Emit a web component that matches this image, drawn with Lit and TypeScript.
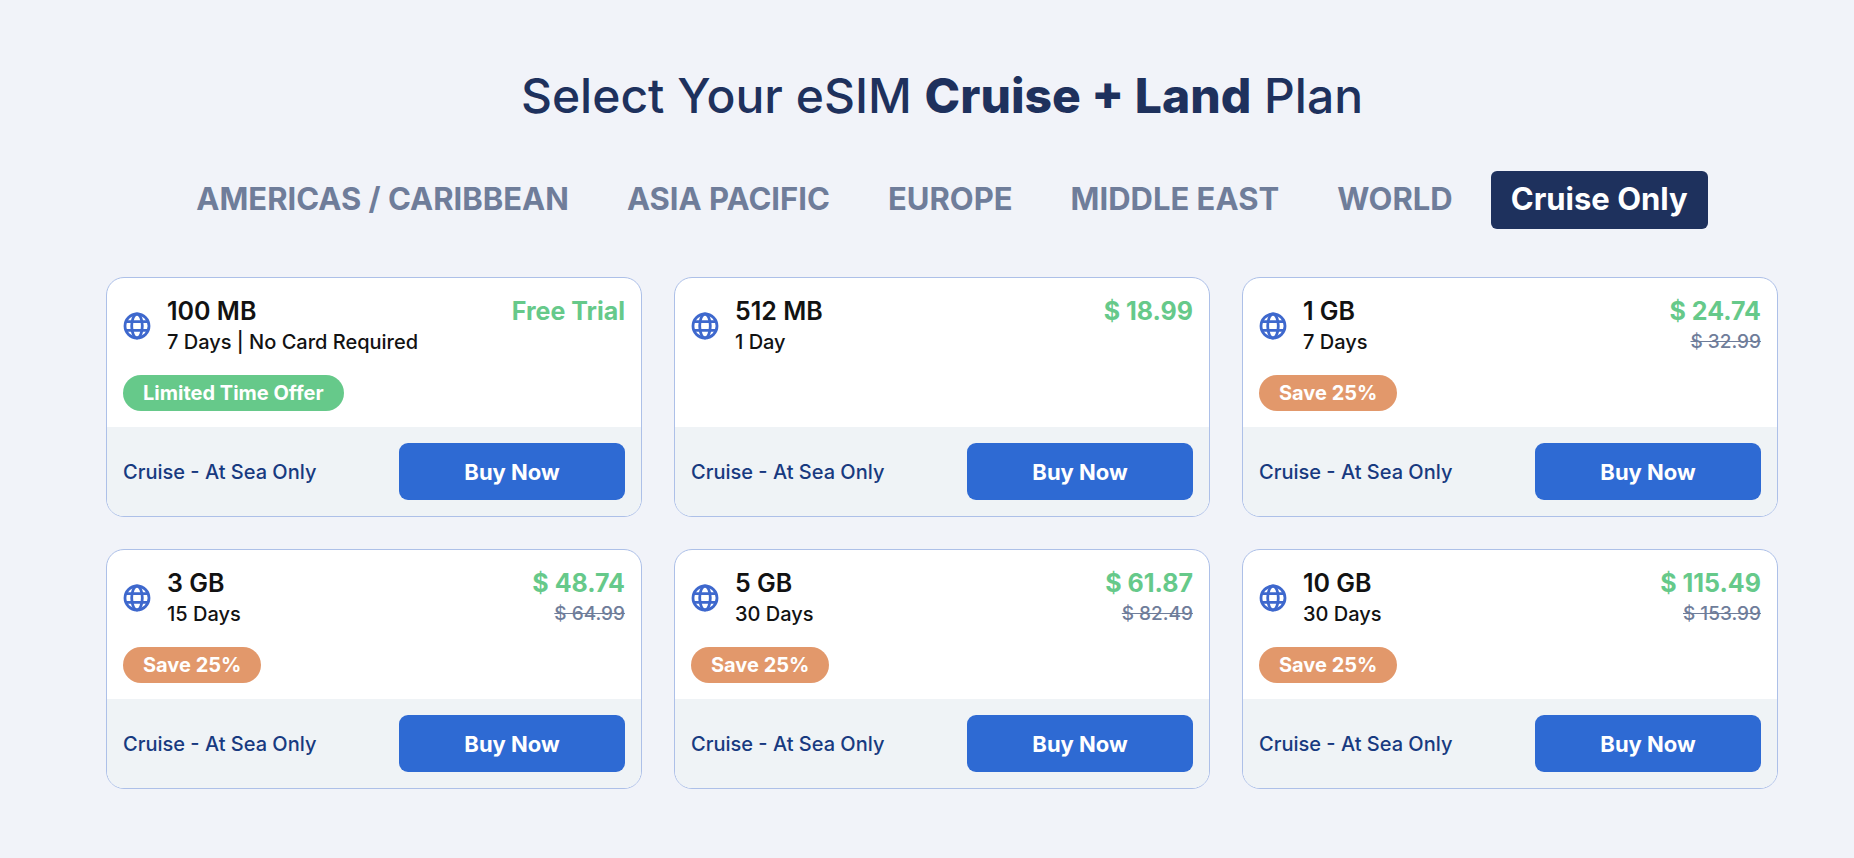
import { LitElement, html, css, nothing } from "lit";
import { customElement, property, state } from "lit/decorators.js";

interface Plan {
  data: string;
  validity: string;
  price: string;
  oldPrice?: string;
  badge?: string;
  promo?: boolean;
}

const REGIONS = [
  "AMERICAS / CARIBBEAN",
  "ASIA PACIFIC",
  "EUROPE",
  "MIDDLE EAST",
  "WORLD",
  "Cruise Only",
];

const PLANS: Plan[] = [
  { data: "100 MB", validity: "7 Days | No Card Required", price: "Free Trial", badge: "Limited Time Offer", promo: true },
  { data: "512 MB", validity: "1 Day", price: "$ 18.99" },
  { data: "1 GB", validity: "7 Days", price: "$ 24.74", oldPrice: "$ 32.99", badge: "Save 25%" },
  { data: "3 GB", validity: "15 Days", price: "$ 48.74", oldPrice: "$ 64.99", badge: "Save 25%" },
  { data: "5 GB", validity: "30 Days", price: "$ 61.87", oldPrice: "$ 82.49", badge: "Save 25%" },
  { data: "10 GB", validity: "30 Days", price: "$ 115.49", oldPrice: "$ 153.99", badge: "Save 25%" },
];

@customElement("plan-card")
export class PlanCard extends LitElement {
  @property({ attribute: false }) plan!: Plan;

  static styles = css`
    :host {
      display: block;
      min-width: 0;
    }
    .card {
      display: flex;
      flex-direction: column;
      height: 100%;
      box-sizing: border-box;
      border: 1px solid #adc0e8;
      border-radius: 18px;
      overflow: hidden;
      background: #ffffff;
    }
    .body {
      flex: 1;
      min-height: 149px;
      box-sizing: border-box;
      padding: 17px 16px 16px;
      display: flex;
      flex-direction: column;
      justify-content: space-between;
      align-items: flex-start;
    }
    .summary {
      display: flex;
      width: 100%;
      align-items: flex-start;
      gap: 16px;
    }
    .what {
      display: flex;
      flex: 1;
      align-items: center;
      gap: 16px;
    }
    .globe {
      width: 28px;
      height: 28px;
      flex: none;
    }
    .name,
    .validity,
    .price,
    .old {
      margin: 0;
      white-space: nowrap;
    }
    .name,
    .price {
      font-size: 25px;
      line-height: 32px;
      font-weight: 600;
    }
    .validity,
    .old {
      font-size: 20px;
      line-height: 30px;
      font-weight: 500;
    }
    .name,
    .validity {
      color: #121212;
    }
    .cost {
      text-align: right;
    }
    .price {
      font-weight: 700;
      color: #66c98a;
    }
    .old {
      display: block;
      font-size: 19px;
      color: #6f7d9a;
    }
    .badge {
      padding: 0 20px;
      border-radius: 18px;
      background: #e2986b;
      color: #ffffff;
      font-size: 20px;
      line-height: 36px;
      font-weight: 700;
    }
    .promo {
      background: #66c98a;
    }
    .foot {
      display: flex;
      align-items: center;
      justify-content: space-between;
      gap: 16px;
      padding: 16px;
      background: #eff3f6;
    }
    .coverage {
      color: #173a80;
      font-size: 20px;
      line-height: 28px;
      font-weight: 500;
    }
    .buy {
      flex: 0 0 45%;
      height: 57px;
      border: 0;
      border-radius: 9px;
      background: #2e6ad3;
      color: #ffffff;
      font: inherit;
      font-size: 22px;
      font-weight: 700;
      cursor: pointer;
    }
  `;

  render() {
    const p = this.plan;
    return html`
      <article class="card">
        <div class="body">
          <div class="summary">
            <div class="what">
              <svg class="globe" viewBox="0 0 28 28" fill="none" stroke="#3e68cd" stroke-width="2.8" aria-hidden="true">
                <circle cx="14" cy="14" r="12" />
                <ellipse cx="14" cy="14" rx="5.3" ry="12" />
                <path d="M3 9.6H25M3 18.4H25" />
              </svg>
              <div>
                <h2 class="name">${p.data}</h2>
                <p class="validity">${p.validity}</p>
              </div>
            </div>
            <div class="cost">
              <p class="price">${p.price}</p>
              ${p.oldPrice ? html`<s class="old">${p.oldPrice}</s>` : nothing}
            </div>
          </div>
          ${p.badge ? html`<span class="badge ${p.promo ? "promo" : ""}">${p.badge}</span>` : nothing}
        </div>
        <div class="foot">
          <span class="coverage">Cruise - At Sea Only</span>
          <button class="buy" type="button">Buy Now</button>
        </div>
      </article>
    `;
  }
}

@customElement("app-root")
export class AppRoot extends LitElement {
  @state() private selected = "Cruise Only";

  static styles = css`
    :host {
      display: block;
      box-sizing: border-box;
      min-height: 100vh;
      padding: 64px 76px 69px 106px;
      background: #f1f3f9;
      font-family: Inter, "Open Sans", sans-serif;
    }
    .title {
      margin: 0 0 43px;
      color: #1e315d;
      font-size: 48px;
      line-height: 64px;
      font-weight: 500;
      text-align: center;
    }
    .strong {
      font-weight: 800;
    }
    .tabs {
      display: flex;
      flex-wrap: wrap;
      justify-content: center;
      gap: 18px;
      margin-bottom: 48px;
    }
    .tab {
      height: 58px;
      padding: 0 20px 4px;
      border: 0;
      border-radius: 6px;
      background: transparent;
      color: #6f7d9a;
      font: inherit;
      font-size: 31px;
      font-weight: 700;
      white-space: nowrap;
      cursor: pointer;
    }
    .active {
      background: #1e315d;
      color: #ffffff;
    }
    .plans {
      display: grid;
      grid-template-columns: repeat(auto-fit, minmax(440px, 1fr));
      gap: 32px;
    }
  `;

  render() {
    return html`
      <h1 class="title">Select Your eSIM <strong class="strong">Cruise + Land</strong> Plan</h1>
      <nav class="tabs" aria-label="Regions">
        ${REGIONS.map(
          (r) => html`<button
            class="tab ${r === this.selected ? "active" : ""}"
            type="button"
            aria-pressed=${r === this.selected}
            @click=${() => (this.selected = r)}
          >${r}</button>`
        )}
      </nav>
      <main class="plans">
        ${PLANS.map((p) => html`<plan-card .plan=${p}></plan-card>`)}
      </main>
    `;
  }
}
